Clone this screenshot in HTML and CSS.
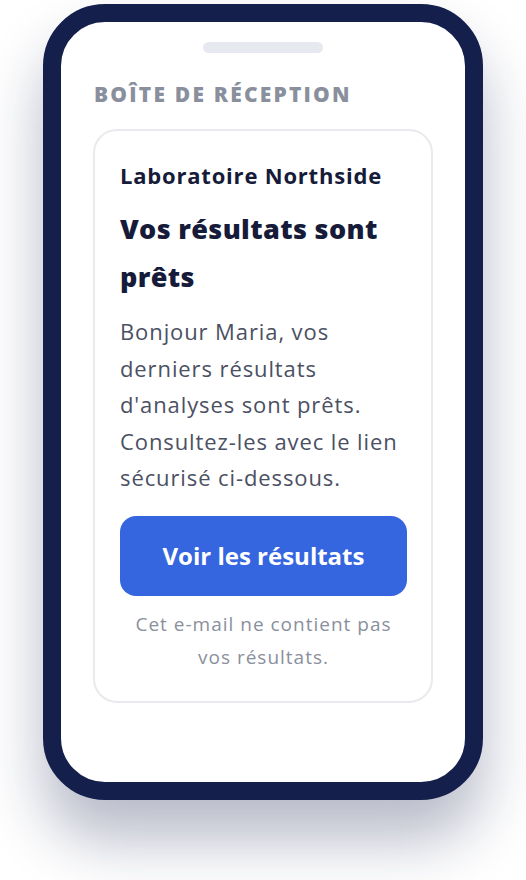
FILE: index.html
```html
<!DOCTYPE html>
<html lang="fr">
<head>
  <meta charset="UTF-8">
  <meta name="viewport" content="width=device-width, initial-scale=1.0">
  <title>Boîte de réception</title>
  <link rel="stylesheet" href="styles.css">
</head>
<body>

  <div class="phone">
    <div class="screen">
      <div class="notch"></div>
      <h2 class="inbox-label">Boîte de réception</h2>

      <section class="mail">
        <h3 class="sender">Laboratoire Northside</h3>
        <h1 class="subject">Vos résultats sont prêts</h1>
        <p class="message">Bonjour Maria, vos derniers résultats d'analyses sont prêts. Consultez-les avec le lien sécurisé ci-dessous.</p>
        <button class="cta">Voir les résultats</button>
        <p class="note">Cet e-mail ne contient pas vos résultats.</p>
      </section>
    </div>
  </div>

</body>
</html>
```

FILE: styles.css
```css
body {
  box-sizing: border-box;
  min-height: 880px;
  margin: 0;
  padding: 4px 0 0;
  background: #fff;
  font-family: 'Open Sans', 'Noto Sans', sans-serif;
  display: flex;
  justify-content: center;
  align-items: flex-start;
}
.phone {
  box-sizing: border-box;
  width: 440px;
  height: 796px;
  border: 18px solid #141f4c;
  border-radius: 62px;
  background: #fff;
  box-shadow: 0 40px 60px rgba(20, 30, 75, 0.3);
}
.screen {
  padding: 20px 32px 0 32px;
}
.notch {
  width: 120px;
  height: 11px;
  margin: 0 auto;
  background: #e6e9ef;
  border-radius: 6px;
}
.inbox-label {
  margin: 27px 0 0 1px;
  font-size: 21px;
  line-height: 28px;
  font-weight: 800;
  letter-spacing: 2.2px;
  text-transform: uppercase;
  color: #8a8f9d;
}
.mail {
  margin-top: 21px;
  border: 2px solid #e9eaee;
  border-radius: 24px;
  padding: 28px 24px 27px 25px;
}
.sender {
  margin: 0;
  font-size: 22px;
  line-height: 32px;
  font-weight: 700;
  letter-spacing: 0.8px;
  color: #161b39;
}
.subject {
  margin: 14px 0 0;
  font-size: 27px;
  line-height: 48px;
  font-weight: 800;
  letter-spacing: 0.35px;
  color: #161b39;
}
.message {
  margin: 12px 0 0;
  font-size: 22px;
  line-height: 36.5px;
  letter-spacing: 0.9px;
  color: #4b5063;
}
.cta {
  display: block;
  width: 100%;
  height: 80px;
  margin-top: 20px;
  border: none;
  border-radius: 16px;
  background: #3566e0;
  color: #fff;
  font-family: inherit;
  font-size: 24px;
  font-weight: 700;
  cursor: pointer;
}
.note {
  margin: 12px 0 0;
  font-size: 19px;
  line-height: 33px;
  letter-spacing: 1px;
  text-align: center;
  color: #8a8f9d;
}
```
